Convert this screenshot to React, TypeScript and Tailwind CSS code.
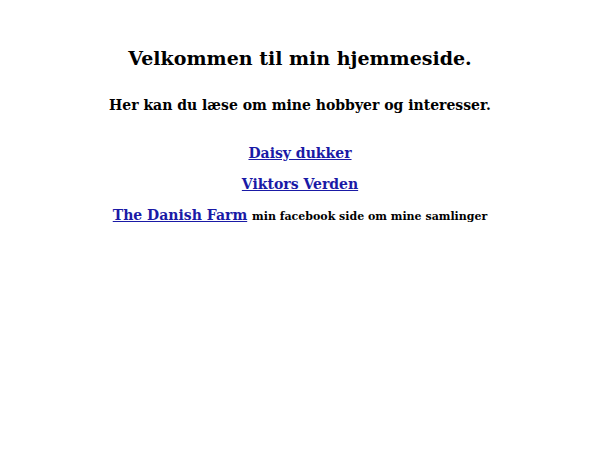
export default function App() {
  return (
    <div className="min-h-[450px] bg-white text-center font-['DejaVu_Serif',serif] font-bold text-black">
      <div className="pt-[47px]">
        <h2 className="text-[19px] leading-[23px]">Velkommen til min hjemmeside.</h2>
        <h3 className="mt-[27px] text-[14px] leading-[17px]">
          Her kan du læse om mine hobbyer og interesser.
        </h3>
        <div className="mt-[31px] flex flex-col items-center gap-[14px] text-[14px] leading-[17px]">
          <a href="#" className="text-[#1a1aa6] underline">Daisy dukker</a>
          <a href="#" className="text-[#1a1aa6] underline">Viktors Verden</a>
          <div>
            <a href="#" className="text-[#1a1aa6] underline">The Danish Farm</a>{" "}
            <span className="text-[11px]">min facebook side om mine samlinger</span>
          </div>
        </div>
      </div>
    </div>
  );
}
